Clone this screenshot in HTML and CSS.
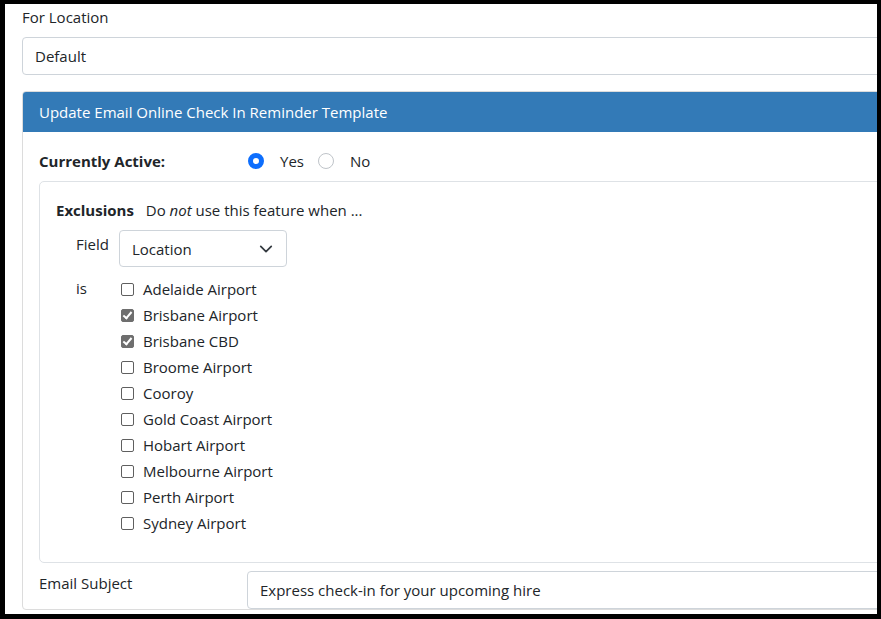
FILE: index.html
```html
<!DOCTYPE html>
<html lang="en">
<head>
  <meta charset="UTF-8">
  <meta name="viewport" content="width=device-width, initial-scale=1.0">
  <title>Online Check In Reminder</title>
  <link rel="stylesheet" href="styles.css">
</head>
<body>
  <div class="frame">
    <div class="page">
      <label class="top-label">For Location</label>
      <div class="input select-plain">Default</div>

      <div class="card">
        <div class="card-header">Update Email Online Check In Reminder Template</div>
        <div class="card-body">
          <div class="row">
            <div class="row-label bold">Currently Active:</div>
            <div class="radios">
              <span class="radio checked"></span><span class="radio-text">Yes</span>
              <span class="radio"></span><span class="radio-text">No</span>
            </div>
          </div>

          <div class="exclusions">
            <div class="excl-title"><b>Exclusions</b> Do <i>not</i> use this feature when ...</div>
            <div class="excl-row">
              <div class="excl-label field-label">Field</div>
              <div class="field-select">
                <span>Location</span>
                <svg width="14" height="14" viewBox="0 0 16 16"><path d="m2 5 6 6 6-6" fill="none" stroke="#343a40" stroke-width="2" stroke-linecap="round" stroke-linejoin="round"/></svg>
              </div>
            </div>
            <div class="excl-row">
              <div class="excl-label is-label">is</div>
              <ul class="checks">
                <li><span class="check"></span>Adelaide Airport</li>
                <li><span class="check on"></span>Brisbane Airport</li>
                <li><span class="check on"></span>Brisbane CBD</li>
                <li><span class="check"></span>Broome Airport</li>
                <li><span class="check"></span>Cooroy</li>
                <li><span class="check"></span>Gold Coast Airport</li>
                <li><span class="check"></span>Hobart Airport</li>
                <li><span class="check"></span>Melbourne Airport</li>
                <li><span class="check"></span>Perth Airport</li>
                <li><span class="check"></span>Sydney Airport</li>
              </ul>
            </div>
          </div>

          <div class="row subject-row">
            <div class="row-label">Email Subject</div>
            <div class="input subject">Express check-in for your upcoming hire</div>
          </div>
        </div>
      </div>
    </div>
  </div>
</body>
</html>
```

FILE: styles.css
```css
body {
  margin: 0;
  background: #000;
  font-family: "Open Sans", "Noto Sans", sans-serif;
  font-size: 15px;
  color: #212529;
}

.frame {
  margin: 4px 4px 0 5px;
  height: 610px;
  background: #fff;
  overflow: hidden;
}

.page {
  width: 1100px;
  padding: 1px 0 0 17px;
  line-height: 24px;
}

.top-label {
  display: block;
  margin-bottom: 8px;
}

.input {
  border: 1px solid #ced4da;
  border-radius: 4px;
  height: 36px;
  line-height: 36px;
  padding: 0 12px;
}

.card {
  margin-top: 16px;
  border: 1px solid #dcdcdc;
  border-radius: 4px;
}

.card-header {
  background: #337ab7;
  color: #fff;
  height: 40px;
  line-height: 40px;
  padding: 0 16px;
  border-radius: 3px 3px 0 0;
}

.card-body {
  padding: 17px 16px 0 16px;
}

.row {
  display: flex;
  align-items: center;
}

.row-label {
  width: 208px;
  flex: none;
}

.bold {
  font-weight: 700;
}

.radios {
  display: flex;
  align-items: center;
}

.radio {
  width: 16px;
  height: 16px;
  box-sizing: border-box;
  border: 1px solid #bfc4c9;
  border-radius: 50%;
  margin-left: 1px;
}

.radio.checked {
  border: 5px solid #0d6efd;
  background: #fff;
}

.radio-text {
  margin: 0 13px 0 16px;
}

.exclusions {
  margin-top: 8px;
  border: 1px solid #dee2e6;
  border-radius: 5px;
  padding: 16px 16px 26px 16px;
}

.excl-title b {
  margin-right: 8px;
}

.excl-row {
  display: flex;
  align-items: flex-start;
  padding-left: 20px;
}

.excl-label {
  width: 43px;
  flex: none;
}

.field-label {
  margin-top: 10px;
}

.field-select {
  margin-top: 8px;
  width: 168px;
  height: 37px;
  box-sizing: border-box;
  border: 1px solid #ced4da;
  border-radius: 4px;
  display: flex;
  align-items: center;
  justify-content: space-between;
  padding: 0 13px 0 12px;
}

.is-label {
  margin-top: 9px;
}

.checks {
  list-style: none;
  margin: 9px 0 0 2px;
  padding: 0;
}

.checks li {
  display: flex;
  align-items: center;
  height: 26px;
}

.check {
  width: 13px;
  height: 13px;
  box-sizing: border-box;
  border: 1px solid #5f5f5f;
  border-radius: 2px;
  margin-right: 9px;
  position: relative;
}

.check.on {
  background: #6e6e6e;
  border-color: #6e6e6e;
}

.check.on::after {
  content: "";
  position: absolute;
  left: 3px;
  top: 0px;
  width: 3px;
  height: 7px;
  border: solid #fff;
  border-width: 0 2px 2px 0;
  transform: rotate(40deg);
}

.subject-row {
  margin-top: 8px;
  align-items: flex-start;
}

.subject {
  flex: 1;
}
```
